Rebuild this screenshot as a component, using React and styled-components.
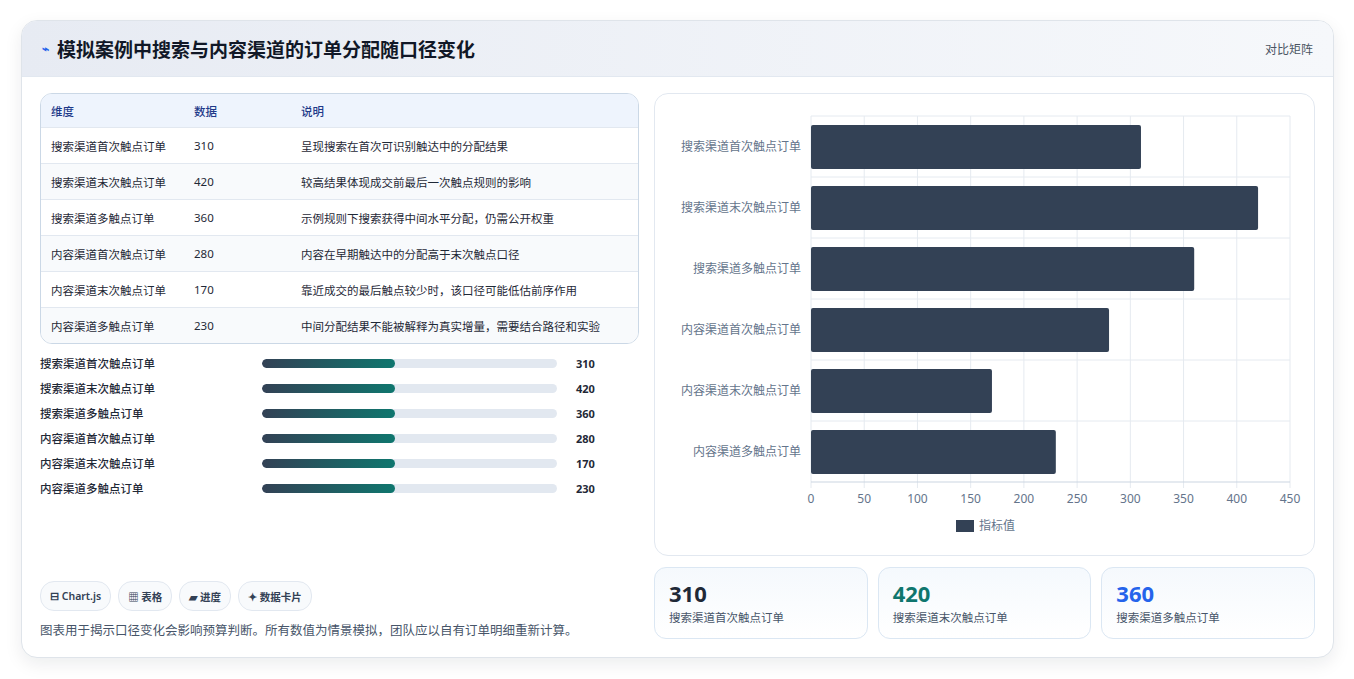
import { createGlobalStyle } from "styled-components";
import styled from "styled-components";

const Global = createGlobalStyle`
  body { margin: 0; background: #f3f4f6; font-family: "Noto Sans", "Noto Sans CJK SC", sans-serif; color: #1f2937; }
`;

const rows = [
  ["搜索渠道首次触点订单", 310, "呈现搜索在首次可识别触达中的分配结果"],
  ["搜索渠道末次触点订单", 420, "较高结果体现成交前最后一次触点规则的影响"],
  ["搜索渠道多触点订单", 360, "示例规则下搜索获得中间水平分配，仍需公开权重"],
  ["内容渠道首次触点订单", 280, "内容在早期触达中的分配高于末次触点口径"],
  ["内容渠道末次触点订单", 170, "靠近成交的最后触点较少时，该口径可能低估前序作用"],
  ["内容渠道多触点订单", 230, "中间分配结果不能被解释为真实增量，需要结合路径和实验"],
];

const Page = styled.div`
  padding: 20px 20px 22px 21px;
  background: #fff;
`;
const Card = styled.div`
  border: 1px solid #dfe4ea;
  border-radius: 16px;
  overflow: hidden;
  background: #fff;
  box-shadow: 0 6px 18px rgba(15, 23, 42, 0.08);
`;
const Header = styled.div`
  height: 55px;
  display: flex;
  align-items: center;
  justify-content: space-between;
  padding: 0 20px;
  background: linear-gradient(90deg, #e7ebf3, #f6f8fb);
  border-bottom: 1px solid #e2e8f0;
`;
const Title = styled.h1`
  margin: 0;
  font-size: 19px;
  font-weight: 700;
  color: #111827;
  display: flex;
  align-items: center;
  gap: 8px;
`;
const HeadLink = styled.span`
  font-size: 12px;
  color: #4b5563;
`;
const Body = styled.div`
  display: grid;
  grid-template-columns: 599px 661px;
  gap: 15px;
  padding: 16px 18px 18px 18px;
`;
const Left = styled.div`
  display: flex;
  flex-direction: column;
`;
const Table = styled.div`
  border: 1px solid #cbd8e6;
  border-radius: 12px;
  overflow: hidden;
`;
const TRow = styled.div`
  display: grid;
  grid-template-columns: 143px 107px 1fr;
  height: ${p => (p.$head ? 33 : 35)}px;
  align-items: center;
  padding: 0 10px;
  font-size: 11.5px;
  font-weight: ${p => (p.$head ? 500 : 400)};
  color: ${p => (p.$head ? "#1e3a8a" : "#1f2937")};
  background: ${p => (p.$head ? "#eef4fd" : p.$alt ? "#f8fafc" : "#fff")};
  border-top: ${p => (p.$head ? "none" : "1px solid #e2e8f0")};
`;
const Bars = styled.div`
  display: flex;
  flex-direction: column;
  gap: 7px;
  margin-top: 10px;
`;
const BarRow = styled.div`
  display: grid;
  grid-template-columns: 222px 305px 1fr;
  gap: 0 0;
  align-items: center;
  height: 18px;
  font-size: 11.5px;
  font-weight: 500;
`;
const Track = styled.div`
  height: 9px;
  background: #e2e8f0;
  border-radius: 5px;
  margin-right: 10px;
  overflow: hidden;
`;
const Fill = styled.div`
  height: 100%;
  width: 45%;
  border-radius: 5px;
  background: linear-gradient(90deg, #334155, #0f766e);
`;
const Val = styled.span`
  padding-left: 9px;
  font-weight: 700;
  font-size: 11px;
`;
const Foot = styled.div`
  margin-top: auto;
`;
const Chips = styled.div`
  display: flex;
  gap: 7px;
`;
const Chip = styled.span`
  display: inline-flex;
  align-items: center;
  gap: 4px;
  height: 28px;
  padding: 0 9px;
  border: 1px solid #e2e8f0;
  border-radius: 14px;
  font-size: 10.5px;
  font-weight: 600;
  color: #334155;
  background: #f8fafc;
`;
const Note = styled.p`
  margin: 9px 0 0;
  font-size: 12.5px;
  color: #475569;
`;
const Right = styled.div`
  display: flex;
  flex-direction: column;
  gap: 11px;
`;
const ChartBox = styled.div`
  height: 461px;
  border: 1px solid #e2e8f0;
  border-radius: 14px;
  background: #fff;
`;
const Stats = styled.div`
  display: grid;
  grid-template-columns: repeat(3, 1fr);
  gap: 10px;
`;
const Stat = styled.div`
  height: 72px;
  border: 1px solid #dbe7f3;
  border-radius: 12px;
  background: linear-gradient(180deg, #f5f9fd, #fff);
  padding: 12px 14px;
  box-sizing: border-box;
`;
const Big = styled.div`
  font-size: 22px;
  font-weight: 700;
  line-height: 26px;
  color: ${p => p.$c};
`;
const Small = styled.div`
  font-size: 11.5px;
  color: #475569;
  margin-top: 3px;
`;

function Chart() {
  const x0 = 156, w = 479, y0 = 22, rowH = 61, max = 450;
  const ticks = [0, 50, 100, 150, 200, 250, 300, 350, 400, 450];
  return (
    <svg width="661" height="461" fontFamily="Noto Sans, Noto Sans CJK SC, sans-serif">
      {ticks.map(t => {
        const x = x0 + (t / max) * w;
        return (
          <g key={t}>
            <line x1={x} x2={x} y1={y0} y2={y0 + rowH * 6 + 6} stroke="#e5eaf0" />
            <text x={x} y={y0 + rowH * 6 + 21} textAnchor="middle" fontSize="12" fill="#64748b">{t}</text>
          </g>
        );
      })}
      {[0, 1, 2, 3, 4, 5, 6].map(i => (
        <line key={i} x1={x0} x2={x0 + w} y1={y0 + i * rowH} y2={y0 + i * rowH} stroke={i === 6 ? "#cbd5e1" : "#e5eaf0"} />
      ))}
      {rows.map(([n, v], i) => (
        <g key={n}>
          <rect x={x0} y={y0 + i * rowH + 9} width={(v / max) * w} height={44} rx="2" fill="#334155" />
          <text x={x0 - 10} y={y0 + i * rowH + 35} textAnchor="end" fontSize="12" fill="#64748b">{n}</text>
        </g>
      ))}
      <rect x="301" y="426" width="18" height="12" fill="#334155" />
      <text x="324" y="436" fontSize="12" fill="#64748b">指标值</text>
    </svg>
  );
}

export default function App() {
  return (
    <Page>
      <Global />
      <Card>
        <Header>
          <Title><span style={{ fontSize: 12, color: "#2563eb" }}>⌁</span>模拟案例中搜索与内容渠道的订单分配随口径变化</Title>
          <HeadLink>对比矩阵</HeadLink>
        </Header>
        <Body>
          <Left>
            <Table>
              <TRow $head><span>维度</span><span>数据</span><span>说明</span></TRow>
              {rows.map(([n, v, d], i) => (
                <TRow key={n} $alt={i % 2 === 1}><span>{n}</span><span>{v}</span><span>{d}</span></TRow>
              ))}
            </Table>
            <Bars>
              {rows.map(([n, v]) => (
                <BarRow key={n}><span>{n}</span><Track><Fill /></Track><Val>{v}</Val></BarRow>
              ))}
            </Bars>
            <Foot>
              <Chips>
                <Chip>⊟ Chart.js</Chip>
                <Chip>▦ 表格</Chip>
                <Chip>▰ 进度</Chip>
                <Chip>✦ 数据卡片</Chip>
              </Chips>
              <Note>图表用于揭示口径变化会影响预算判断。所有数值为情景模拟，团队应以自有订单明细重新计算。</Note>
            </Foot>
          </Left>
          <Right>
            <ChartBox><Chart /></ChartBox>
            <Stats>
              <Stat><Big $c="#1f2937">310</Big><Small>搜索渠道首次触点订单</Small></Stat>
              <Stat><Big $c="#0f766e">420</Big><Small>搜索渠道末次触点订单</Small></Stat>
              <Stat><Big $c="#2563eb">360</Big><Small>搜索渠道多触点订单</Small></Stat>
            </Stats>
          </Right>
        </Body>
      </Card>
    </Page>
  );
}
